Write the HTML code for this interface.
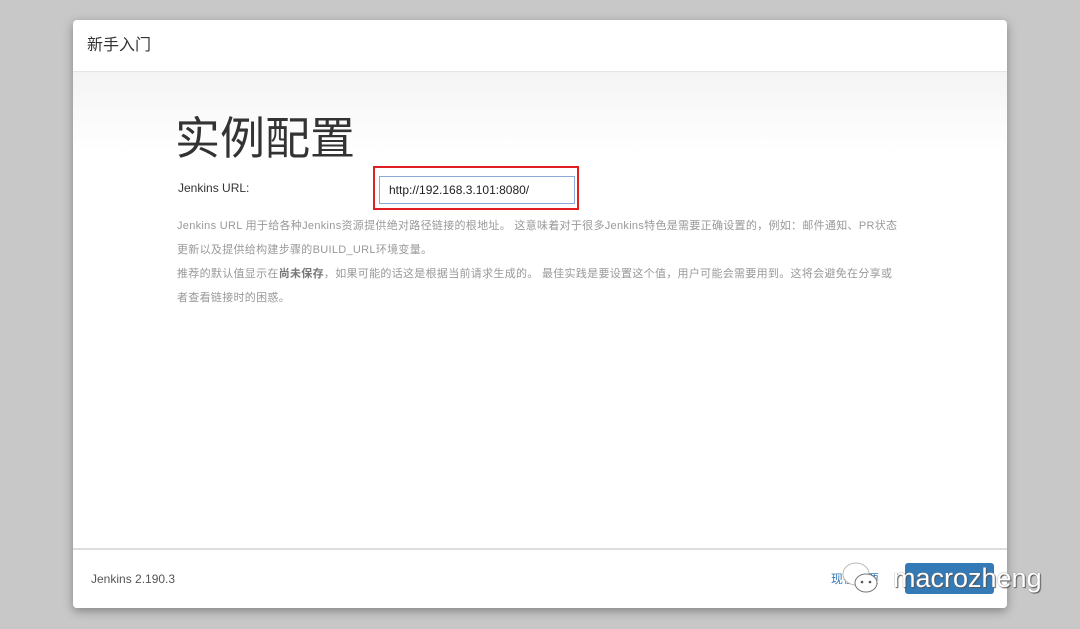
<!DOCTYPE html>
<html><head><meta charset="utf-8"><style>
body{margin:0;width:1080px;height:629px;background:#c8c8c8;font-family:"Liberation Sans","Noto Sans CJK SC",sans-serif;position:relative;overflow:hidden}
.dlg{position:absolute;left:73px;top:20px;width:934px;height:588px;background:#fff;border-radius:4px;box-shadow:0 3px 10px rgba(0,0,0,.35);overflow:hidden}
.hd{height:51px;border-bottom:1px solid #e5e5e5;font-size:16px;color:#333;line-height:51px;padding-left:14px}
.body{position:absolute;top:52px;left:0;right:0;height:477px;background:linear-gradient(#f4f4f4,#fff 80px)}
h1{position:absolute;left:102px;top:40px;margin:0;font-size:45px;font-weight:normal;color:#333;font-family:"Noto Sans CJK SC",sans-serif;line-height:1}
.lbl{position:absolute;left:105px;top:109px;font-size:12px;color:#333}
.red{position:absolute;left:300px;top:94px;width:206px;height:44px;border:2px solid #e02020;box-sizing:border-box}
.inp{position:absolute;left:306px;top:104px;width:196px;height:28px;border:1px solid #8aaad8;box-sizing:border-box;font-size:12px;line-height:26px;padding-left:9px;color:#222;background:#fff}
.help{position:absolute;left:104px;top:142px;width:780px;font-size:11px;line-height:24px;color:#999;letter-spacing:0.3px;white-space:nowrap}
.ft{position:absolute;left:0;right:0;bottom:0;height:58px;border-top:2px solid #ddd;background:#fff}
.ver{position:absolute;left:18px;top:22px;font-size:12px;color:#555}
.btn{position:absolute;left:832px;top:13px;width:89px;height:31px;background:#337ab7;border-radius:3px}
.lnk{position:absolute;left:758px;top:20px;font-size:12px;color:#337ab7}
.wm{position:absolute;left:893px;top:563px;font-size:27px;color:#fff;text-shadow:0 0 1px #666,1px 1px 1px #555}
</style></head><body>
<div class="dlg">
<div class="hd">新手入门</div>
<div class="body">
<h1>实例配置</h1>
<div class="lbl">Jenkins URL:</div>
<div class="red"></div>
<div class="inp">http://192.168.3.101:8080/</div>
<div class="help">Jenkins URL 用于给各种Jenkins资源提供绝对路径链接的根地址。 这意味着对于很多Jenkins特色是需要正确设置的，例如：邮件通知、PR状态<br>更新以及提供给构建步骤的BUILD_URL环境变量。<br>推荐的默认值显示在<b style="color:#777">尚未保存</b>，如果可能的话这是根据当前请求生成的。 最佳实践是要设置这个值，用户可能会需要用到。这将会避免在分享或<br>者查看链接时的困惑。</div>
</div>
<div class="ft"><div class="ver">Jenkins 2.190.3</div><div class="lnk">现在不要</div><div class="btn"></div></div>
</div>
<svg style="position:absolute;left:838px;top:560px" width="50" height="38"><ellipse cx="18" cy="14" rx="13" ry="11" fill="#fff" stroke="#bbb"/><ellipse cx="28" cy="23" rx="11" ry="9" fill="#fff" stroke="#777"/><circle cx="24" cy="22" r="1.3" fill="#555"/><circle cx="32" cy="22" r="1.3" fill="#555"/></svg>
<div class="wm">macrozheng</div>
</body></html>
